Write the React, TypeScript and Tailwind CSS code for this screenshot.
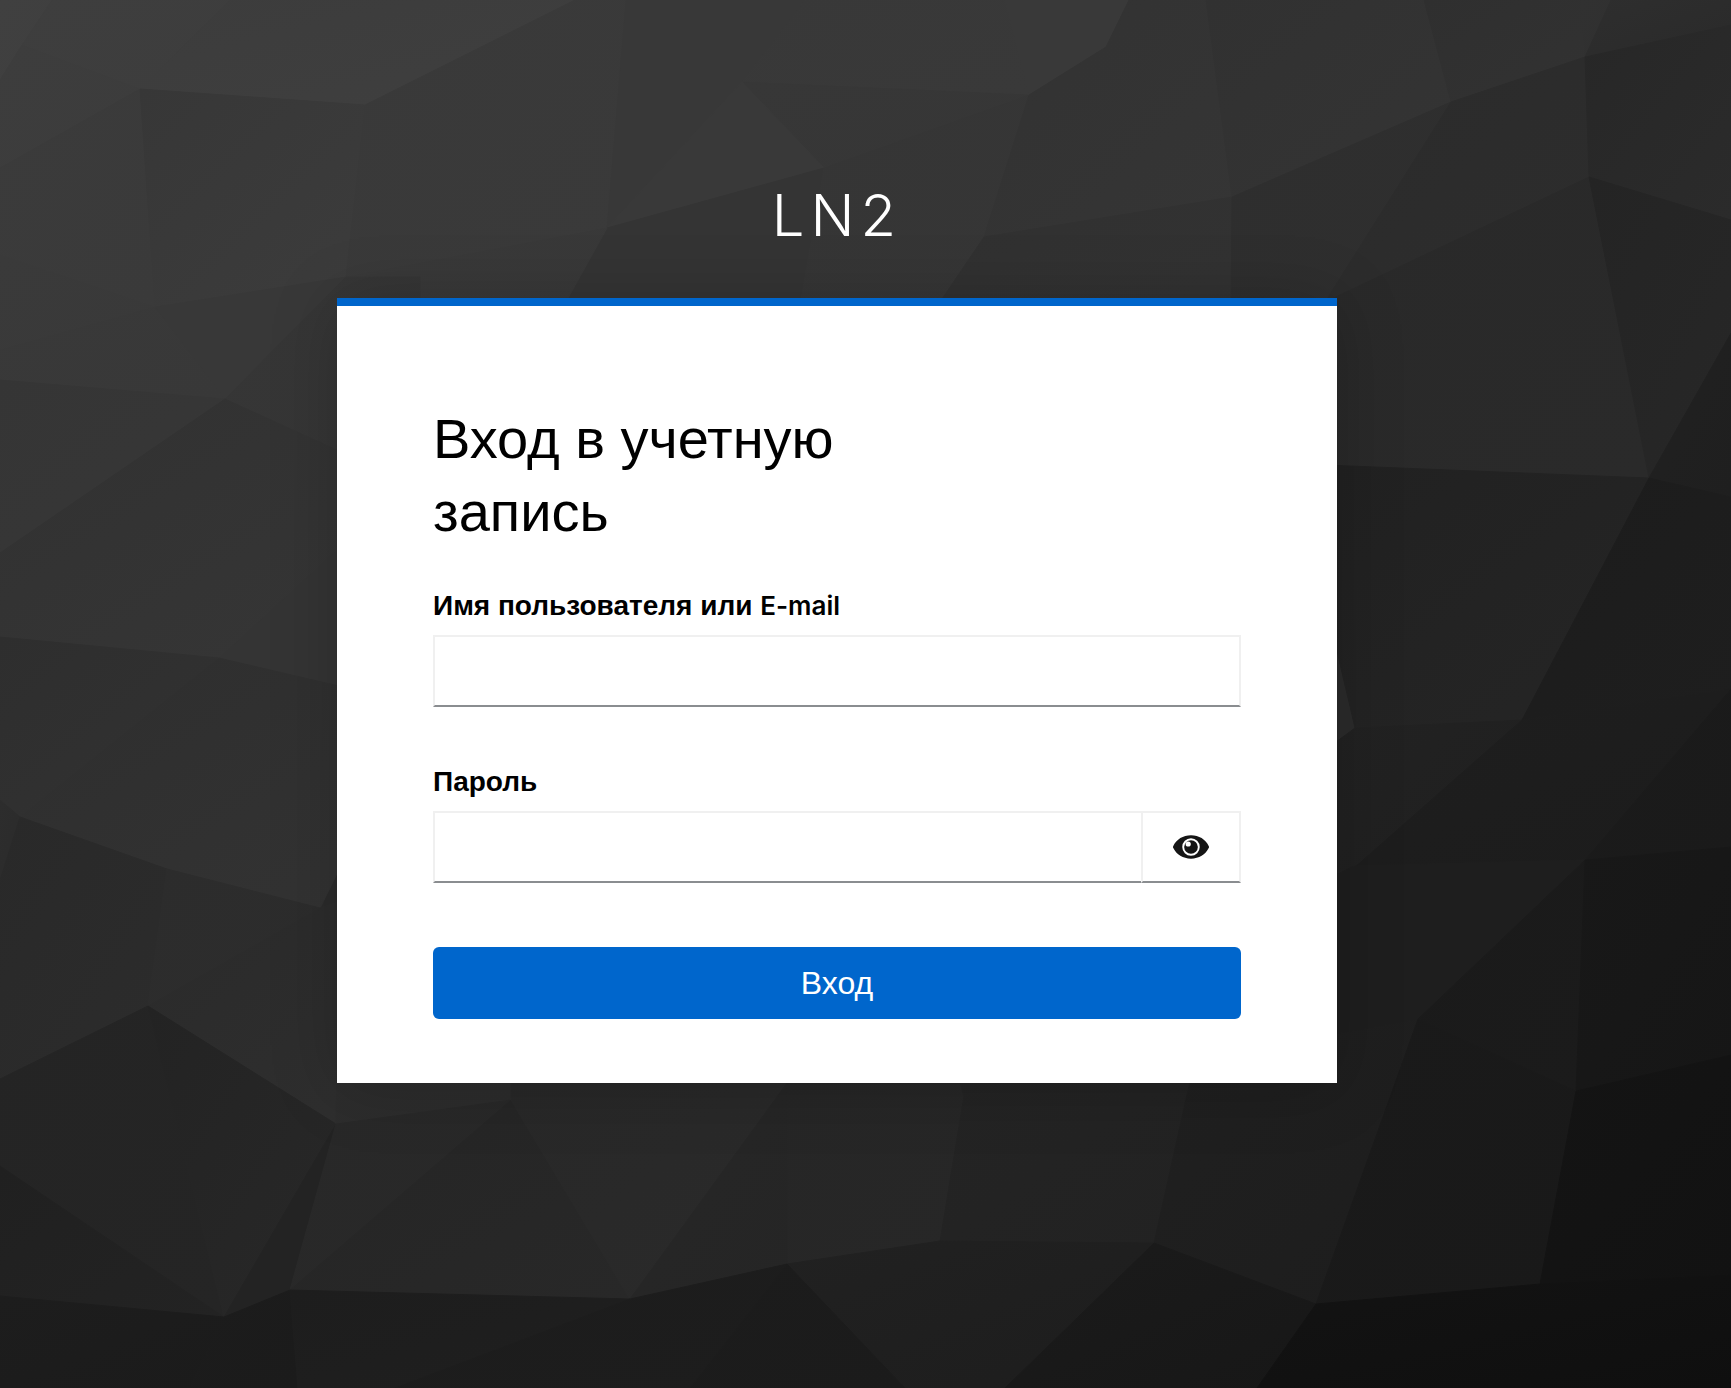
import React, { useState } from "react";

type Face = { points: string; from: number; to: number };

const f = (points: string, from: number, to: number): Face => ({ points, from, to });

// Faces of the backdrop mesh; "from" and "to" are grey levels from the top left to the bottom right.
const faces: Face[] = [
  f("0,0 52,0 22,45 0,80", 64, 63),
  f("52,0 230,0 140,89 22,45", 62, 61),
  f("0,80 22,45 140,89 0,168", 61, 60),
  f("230,0 575,0 365,105 140,89", 60, 63),
  f("0,168 140,89 155,307 0,255", 59, 58),
  f("0,255 155,307 0,350", 58, 57),
  f("140,89 365,105 346,277 155,307", 55, 60),
  f("575,0 626,0 607,228 346,277 365,105", 57, 58),
  f("626,0 805,0 742,82 607,228", 56, 56),
  f("805,0 1005,0 1029,95 742,82", 56, 57),
  f("742,82 1029,95 824,168", 55, 54),
  f("742,82 824,168 607,228", 57, 57),
  f("607,228 824,168 780,420 500,420", 52, 52),
  f("346,277 607,228 500,420 337,420", 57, 56),
  f("824,168 1029,95 984,237 860,420 780,420", 53, 54),
  f("1005,0 1129,0 1106,47 1029,95", 57, 57),
  f("1129,0 1206,0 1232,197 984,237 1029,95 1106,47", 50, 53),
  f("1206,0 1424,0 1451,102 1232,197", 49, 52),
  f("1424,0 1580,0 1585,57 1451,102", 47, 50),
  f("1580,0 1611,0 1585,57", 49, 48),
  f("1611,0 1731,0 1731,25 1585,57", 46, 42),
  f("984,237 1232,197 1230,420 860,420", 48, 51),
  f("1232,197 1451,102 1325,302 1230,420", 46, 47),
  f("1451,102 1585,57 1589,177 1325,302", 43, 45),
  f("1585,57 1731,25 1731,220 1589,177", 39, 43),
  f("1325,302 1589,177 1649,478 1325,465", 41, 42),
  f("1589,177 1731,220 1731,333 1649,478", 36, 39),
  f("1731,333 1731,497 1649,478", 33, 31),
  f("1325,465 1649,478 1522,720 1355,728 1325,600", 33, 37),
  f("1649,478 1731,497 1731,689 1522,720", 28, 30),
  f("0,350 155,307 225,399 0,380", 57, 56),
  f("155,307 346,277 225,399", 56, 56),
  f("0,380 225,399 0,553", 53, 55),
  f("225,399 346,277 420,277 420,488", 54, 53),
  f("225,399 420,488 337,550 219,658 0,637 0,553", 49, 54),
  f("219,658 337,550 420,550 420,705", 52, 52),
  f("0,637 219,658 20,817 0,800", 46, 50),
  f("219,658 420,705 320,908 167,869 20,817", 46, 51),
  f("0,800 20,817 0,880", 45, 43),
  f("20,817 167,869 148,1006 0,1079 0,880", 41, 44),
  f("167,869 320,908 148,1006", 44, 45),
  f("320,908 420,875 420,1110 336,1124 148,1006", 42, 47),
  f("0,1079 148,1006 224,1317 0,1166", 36, 37),
  f("148,1006 336,1124 224,1317", 35, 40),
  f("0,1166 224,1317 0,1296", 32, 35),
  f("0,1296 224,1317 190,1388 0,1388", 29, 27),
  f("336,1124 290,1290 224,1317", 35, 35),
  f("336,1124 337,1000 511,1000 511,1100", 45, 44),
  f("336,1124 511,1100 290,1290", 40, 41),
  f("511,1100 630,1299 290,1290", 37, 40),
  f("511,1100 511,1050 795,1050 787,1083 630,1299", 40, 42),
  f("787,1083 850,1050 950,1050 964,1096 940,1241 787,1264", 38, 39),
  f("787,1083 787,1264 630,1299", 39, 37),
  f("950,1050 1200,1050 1188,1090 1154,1243 940,1241 964,1096", 36, 34),
  f("1188,1090 1200,1050 1337,1033 1418,1019 1316,1304 1154,1243", 32, 29),
  f("1325,750 1355,728 1522,720 1325,925", 34, 31),
  f("1522,720 1731,689 1585,860 1354,868", 30, 28),
  f("1731,689 1731,847 1585,860", 27, 26),
  f("1354,866 1585,860 1418,1019 1325,1036 1325,880", 30, 30),
  f("1585,860 1576,1091 1418,1019", 26, 27),
  f("1585,860 1731,847 1731,1055 1576,1091", 24, 22),
  f("1418,1019 1576,1091 1540,1284 1316,1304", 26, 25),
  f("1576,1091 1731,1055 1731,1275 1540,1284", 20, 18),
  f("224,1317 290,1290 298,1388 190,1388", 28, 27),
  f("290,1290 630,1299 395,1388 298,1388", 29, 31),
  f("630,1299 787,1264 690,1388 395,1388", 28, 29),
  f("787,1264 940,1241 1154,1243 1005,1388 905,1388", 33, 29),
  f("787,1264 905,1388 690,1388", 28, 27),
  f("1154,1243 1316,1304 1257,1388 1005,1388", 27, 23),
  f("1316,1304 1540,1284 1731,1275 1731,1388 1257,1388", 19, 15),
];

function Backdrop() {
  return (
    <svg
      aria-hidden="true"
      viewBox="0 0 1731 1388"
      preserveAspectRatio="xMidYMid slice"
      className="absolute inset-0 h-full w-full"
    >
      <defs>
        {faces.map((face, i) => (
          <linearGradient key={i} id={`face-${i}`} x1="0" y1="0" x2="1" y2="1">
            <stop offset="0" stopColor={`rgb(${face.from},${face.from},${face.from})`} />
            <stop offset="1" stopColor={`rgb(${face.to},${face.to},${face.to})`} />
          </linearGradient>
        ))}
      </defs>
      {faces.map((face, i) => (
        <polygon key={i} points={face.points} fill={`url(#face-${i})`} stroke={`url(#face-${i})`} />
      ))}
    </svg>
  );
}

export default function App() {
  const [visible, setVisible] = useState(false);
  return (
    <div className="relative min-h-screen overflow-hidden bg-[#2b2b2b] pr-[57px] pb-16 font-['Liberation_Sans',sans-serif] text-black">
      <Backdrop />
      <div className="relative mx-auto w-full max-w-[1000px]">
        <header className="pt-[180px] pb-12 text-center font-['Inter',sans-serif] text-[58px] leading-[70px] font-light tracking-[6px] text-white uppercase">
          LN2
        </header>
        <main className="border-t-8 border-[#0066cc] bg-white px-24 pt-24 pb-16 shadow-[0_4px_64px_rgba(0,0,0,0.2)]">
          <h1 className="mb-10 max-w-[440px] text-[56px] leading-[73px]">Вход в учетную запись</h1>
          <form onSubmit={(e) => e.preventDefault()}>
            <div className="mb-[57px]">
              <label htmlFor="username" className="mb-[11px] block text-[28px] leading-9 font-bold">
                Имя пользователя или <span className="font-['Inter',sans-serif] text-[26px] font-semibold">E-mail</span>
              </label>
              <input
                id="username"
                type="text"
                className="block h-[72px] w-full border-2 border-[#f0f0f0] border-b-[#8a8d90] bg-white px-4 text-[32px] outline-none"
              />
            </div>
            <div className="mb-16">
              <label htmlFor="password" className="mb-[11px] block text-[28px] leading-9 font-bold">
                Пароль
              </label>
              <div className="flex">
                <input
                  id="password"
                  type={visible ? "text" : "password"}
                  className="block h-[72px] min-w-0 flex-1 border-2 border-r-0 border-[#f0f0f0] border-b-[#8a8d90] bg-white px-4 text-[32px] outline-none"
                />
                <button
                  type="button"
                  aria-label="Показать пароль"
                  onClick={() => setVisible(!visible)}
                  className="flex h-[72px] w-[100px] items-center justify-center border-2 border-[#f0f0f0] border-b-[#8a8d90] bg-white text-[#151515]"
                >
                  <svg viewBox="0 0 36 24" aria-hidden="true" className="h-6 w-9">
                    <path
                      fill="currentColor"
                      d="M18 .3C10 .3 3.500 4.400.3 10.900a2.200 2.200 0 0 0 0 2.200C3.500 19.600 10 23.700 18 23.700s14.500-4.100 17.700-10.600a2.200 2.200 0 0 0 0-2.200C32.500 4.400 26 .3 18 .3Z"
                    />
                    <circle cx="18" cy="12" r="7.800" fill="none" stroke="white" strokeWidth="1.900" />
                    <circle cx="15.200" cy="9" r="2.600" fill="white" />
                  </svg>
                </button>
              </div>
            </div>
            <button type="submit" className="block h-[72px] w-full rounded-md bg-[#0066cc] text-[32px] leading-[48px] text-white">
              Вход
            </button>
          </form>
        </main>
      </div>
    </div>
  );
}
